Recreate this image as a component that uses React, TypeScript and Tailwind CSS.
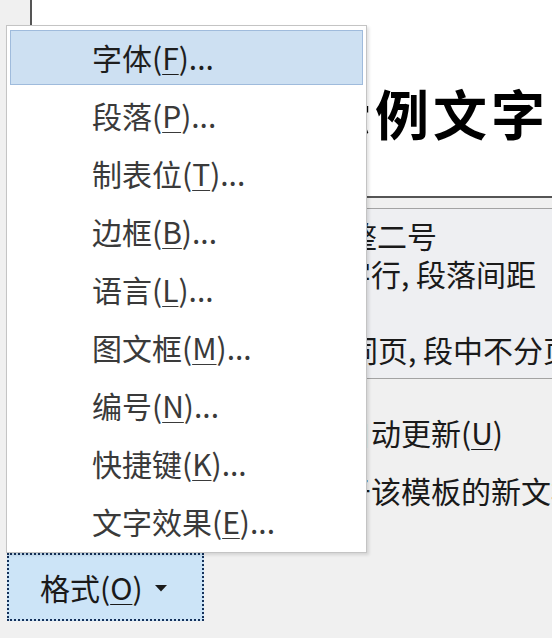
import React from 'react';

const menuItems = [
  { label: '字体', key: 'F' },
  { label: '段落', key: 'P' },
  { label: '制表位', key: 'T' },
  { label: '边框', key: 'B' },
  { label: '语言', key: 'L' },
  { label: '图文框', key: 'M' },
  { label: '编号', key: 'N' },
  { label: '快捷键', key: 'K' },
  { label: '文字效果', key: 'E' },
];

// description lines: the part behind the menu is right-aligned to a fixed edge
const descLines = [
  { edge: 'w-[347px]', head: '二号, 加粗, 字距调整', tail: '二号' },
  { edge: 'w-[341px]', head: '行距: 多倍行距 2.41 字', tail: '行, 段落间距' },
  { edge: 'w-[320px]', head: '段前: 17 磅, 段后: 16.5 磅', tail: '' },
  { edge: 'w-[348px]', head: '与下段同', tail: '页, 段中不分页, 1 级' },
];

const Mnemonic = ({ k }: { k: string }) => (
  <span className="underline decoration-1 underline-offset-[4px]">{k}</span>
);

export default function App() {
  return (
    <div className="relative w-[554px] h-[638px] overflow-hidden bg-[#f0f0f0] font-['Noto_Sans_CJK_SC',sans-serif] text-[#1a1a1a] border-r-2 border-white">
      {/* Preview */}
      <div className="ml-[30px] h-[198px] bg-white border-l-2 border-b-2 border-[#555] pt-[86px] pl-[285px] whitespace-nowrap overflow-hidden">
        <span className="text-[54px] leading-none font-bold tracking-[4px] text-black">示例文字</span>
      </div>
      <div className="h-[10px]" />

      {/* Style description */}
      <div className="ml-[30px] h-[171px] border-y border-[#a3a3a3] bg-[#eeeff2] pt-[7px] text-[30px] leading-[38px]">
        {descLines.map((l, i) => (
          <div key={i} className="flex whitespace-nowrap">
            <span className={`${l.edge} shrink-0 text-right`}>{l.head}</span>
            <span>{l.tail}</span>
          </div>
        ))}
      </div>

      {/* Options */}
      <div className="ml-[30px] mt-[34px] flex whitespace-nowrap text-[30px] leading-[38px]">
        <span className="w-[341px] shrink-0 text-right">自</span>
        <span>
          动更新(<Mnemonic k="U" />)
        </span>
      </div>
      <div className="ml-[30px] mt-[20px] flex whitespace-nowrap text-[30px] leading-[38px]">
        <span className="w-[341px] shrink-0 text-right">仅限此文档 基于</span>
        <span>该模板的新文档</span>
      </div>

      {/* Format button */}
      <button className="mt-[44px] ml-[7px] w-[197px] h-[68px] flex items-center pl-[31px] gap-[12px] bg-[#cce4f7] border-2 border-dotted border-[#15315a] text-[30px] leading-none text-[#1a1a1a]">
        <span>
          格式(<Mnemonic k="O" />)
        </span>
        <svg width="12" height="7" viewBox="0 0 12 7" className="mt-[2px]">
          <polygon points="0,0 12,0 6,6.5" fill="#1a1a1a" />
        </svg>
      </button>

      {/* Dropdown menu */}
      <div className="absolute left-[6px] top-[25px] w-[361px] bg-white border border-[#c4c4c4] shadow-[2px_2px_3px_rgba(0,0,0,0.12)] pt-[4px] pb-[3px] px-[3px] flex flex-col gap-[3px]">
        {menuItems.map((m, i) => (
          <div
            key={m.key}
            className={
              i === 0
                ? 'h-[55px] flex items-center pl-[81px] bg-[#cde0f2] border border-[#9fbbdc] text-[30px] text-[#1e1e1e] whitespace-nowrap'
                : 'h-[55px] flex items-center pl-[82px] text-[30px] text-[#3a3a3a] whitespace-nowrap'
            }
          >
            {m.label}(<Mnemonic k={m.key} />)...
          </div>
        ))}
      </div>
    </div>
  );
}
